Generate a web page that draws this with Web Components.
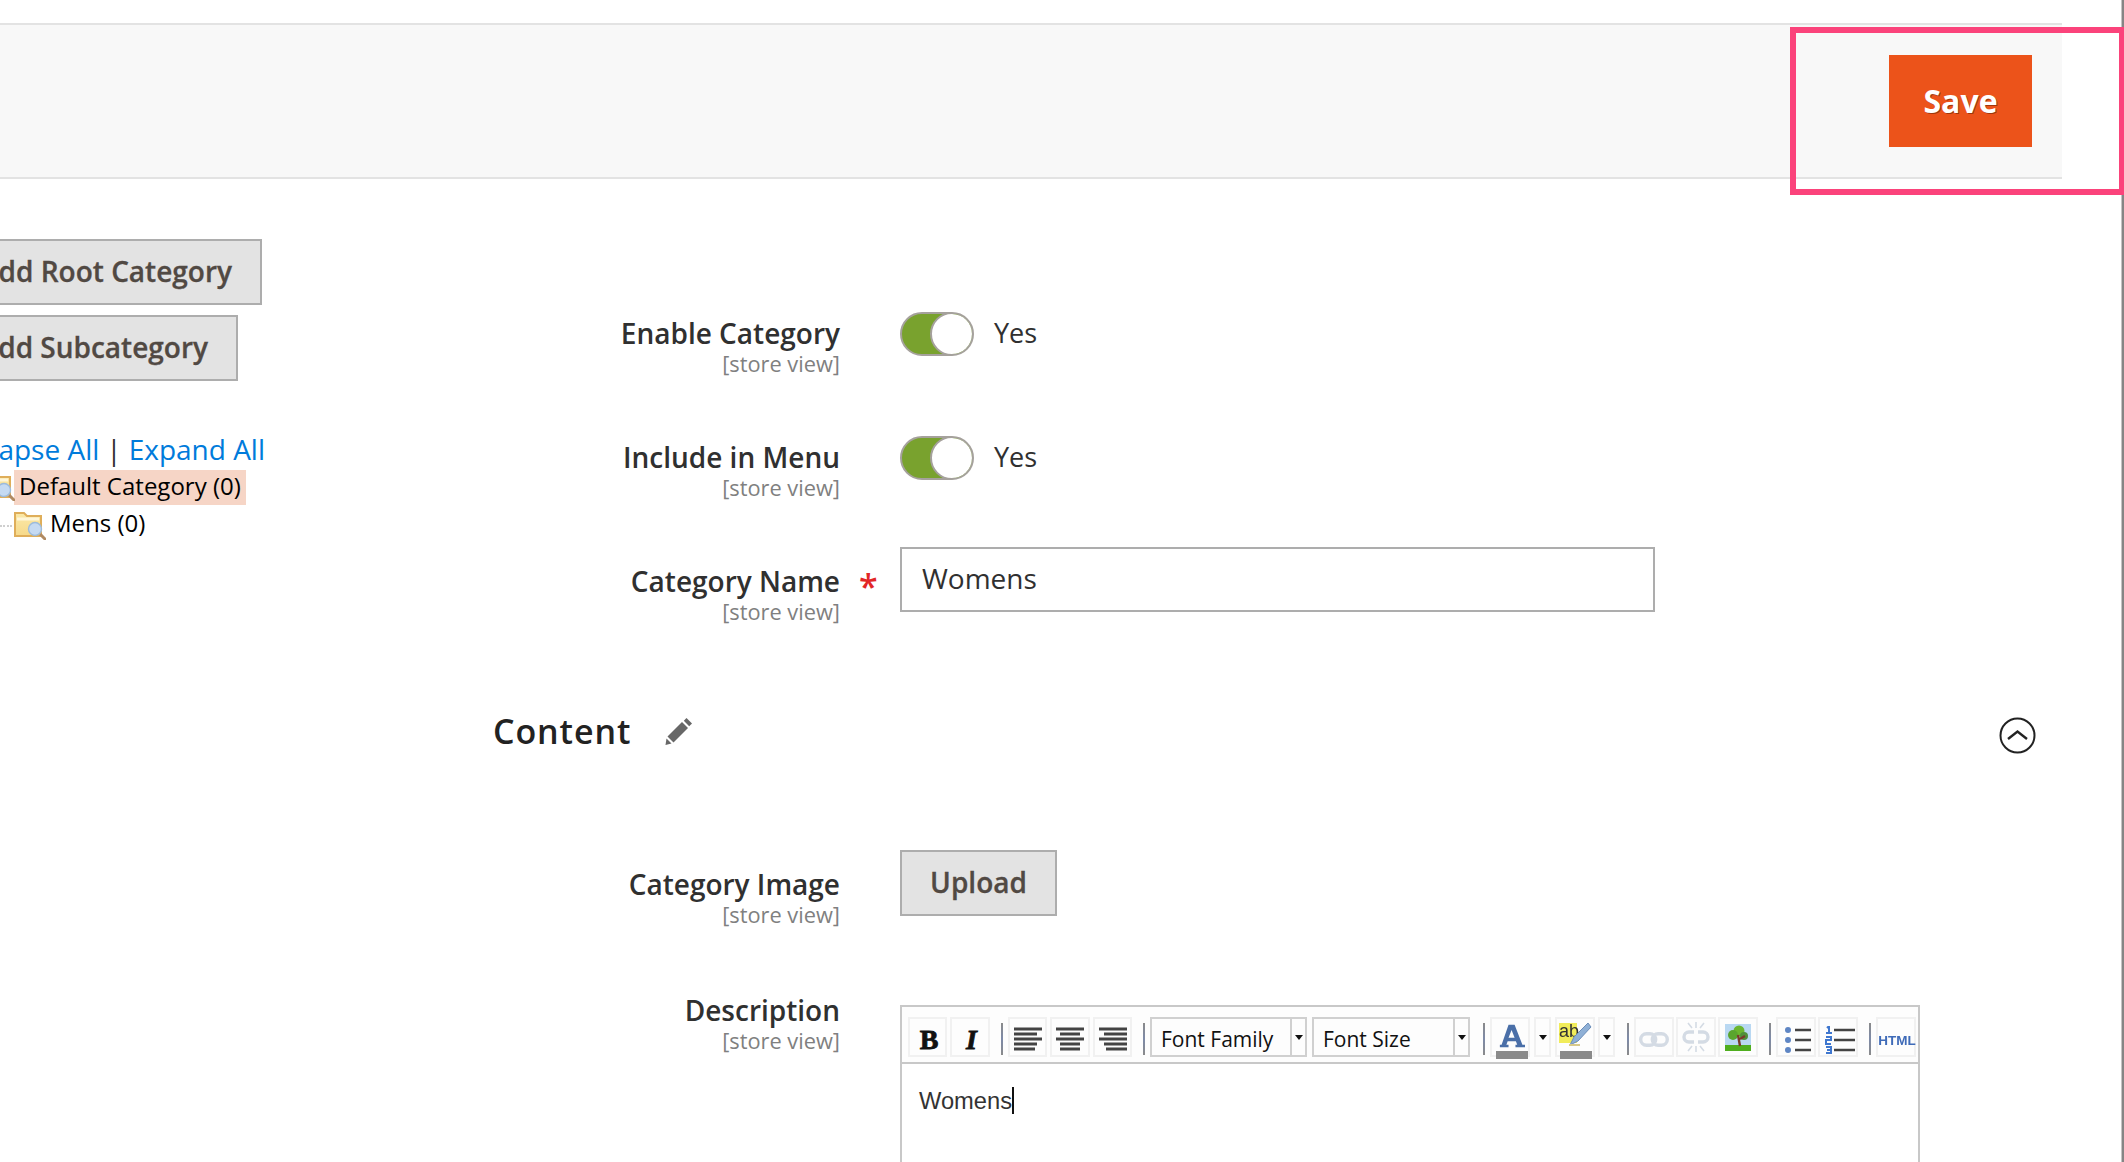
<!DOCTYPE html>
<html>
<head>
<meta charset="utf-8">
<title>Category</title>
<style>
    html, body { margin: 0; padding: 0; background: #fff; }
    body { width: 2124px; height: 1162px; overflow: hidden; font-family: "Open Sans", sans-serif; color: #303030; }
</style>
</head>
<body>
<cat-page>
    <page-actions slot="bar"></page-actions>
    <tree-panel slot="aside"></tree-panel>
    <cat-form slot="main"></cat-form>
</cat-page>

<script>
const pageTemplate = document.createElement('template');
pageTemplate.innerHTML = `
    <style>
        :host { display: block; position: relative; width: 2124px; height: 1162px; overflow: hidden; padding-top: 23px; box-sizing: border-box; }
        .body { display: flex; }
        .aside { width: 400px; flex: none; }
        .main { flex: 1; min-width: 0; }
        .edge { position: absolute; right: 0; top: 0; bottom: 0; width: 2px; background: #858585; border-left: 1px solid #c4c4c4; }
        .mark { position: absolute; left: 1790px; top: 27px; width: 334px; height: 168px; box-sizing: border-box; border: 6px solid #fb437b; border-right-width: 5px; }
    </style>
    <slot name="bar"></slot>
    <div class="body">
        <div class="aside"><slot name="aside"></slot></div>
        <div class="main"><slot name="main"></slot></div>
    </div>
    <div class="edge"></div>
    <div class="mark"></div>
`;

class CatPage extends HTMLElement
{
    constructor()
    {
        super();
        this.attachShadow({mode: 'open'}).appendChild(pageTemplate.content.cloneNode(true));
    }
}

const actionsTemplate = document.createElement('template');
actionsTemplate.innerHTML = `
    <style>
        :host { display: flex; justify-content: flex-end; align-items: center; box-sizing: border-box; width: 2062px; height: 156px; padding-right: 30px; background: #f8f8f8; border-top: 2px solid #e3e3e3; border-bottom: 2px solid #e3e3e3; }
        button { width: 143px; height: 92px; border: 0; padding: 0 0 2px; background: #ec531a; color: #fff; font: 700 32px "Open Sans", sans-serif; text-shadow: 1px 1px 0 rgba(90,30,0,.55); }
    </style>
    <button>Save</button>
`;

class PageActions extends HTMLElement
{
    constructor()
    {
        super();
        this.attachShadow({mode: 'open'}).appendChild(actionsTemplate.content.cloneNode(true));
    }
}

const folderIcon = `
    <defs><linearGradient id="fold" x1="0" y1="0" x2="0" y2="1"><stop offset="0" stop-color="#fbe9a8"/><stop offset="1" stop-color="#f6d98a"/></linearGradient></defs>
    <path d="M1 1 H10 L13 4 H27 V24 H1 Z" fill="url(#fold)" stroke="#dfae5a" stroke-width="2"/>
    <path d="M3 7 H25" stroke="#fff6d8" stroke-width="3"/>
    <path d="M26 22 L32 28" stroke="#b08a62" stroke-width="3"/>
    <circle cx="21" cy="17" r="6.5" fill="#c5daf2" stroke="#9cbbdc" stroke-width="1.4"/>
`;

const treeTemplate = document.createElement('template');
treeTemplate.innerHTML = `
    <style>
        :host { display: block; overflow: hidden; padding-top: 60px; height: 400px; }
        .btn { display: flex; align-items: center; justify-content: flex-end; box-sizing: border-box; height: 66px; border: 2px solid #adadad; border-left: 0; background: #e3e3e3; color: #514943; font-size: 28px; font-weight: 600; -webkit-text-stroke: .3px #514943; white-space: nowrap; padding: 0 28px 3px 0; }
        .root { width: 262px; }
        .sub { width: 238px; margin-top: 10px; }
        .links { margin-top: 50px; width: 265px; height: 38px; line-height: 36px; font-size: 28px; color: #303030; white-space: nowrap; display: flex; justify-content: flex-end; }
        .links a { color: #007bdb; }
        .links span { margin: 0 7px; }
        ul { list-style: none; margin: 0; padding: 0; font-size: 24px; color: #000; }
        li { display: flex; align-items: center; height: 36px; white-space: nowrap; }
        .one b { font-weight: 400; background: #f6d5c6; margin-left: 14px; padding: 0 0 0 5px; height: 35px; line-height: 32px; width: 232px; box-sizing: border-box; }
        .two { position: relative; margin-top: 1px; padding-left: 14px; }
        .two span { margin-left: 4px; margin-top: -4px; }
        svg { display: block; flex: none; margin-top: 4px; }
        .cut { position: absolute; left: -17px; top: -33px; margin: 0; }
        .dots { position: absolute; left: 0; top: 19px; width: 12px; border-top: 2px dotted #cfcfcf; }
    </style>
    <div class="btn root">dd Root Category</div>
    <div class="btn sub">dd Subcategory</div>
    <div class="links"><a>apse All</a><span>|</span><a>Expand All</a></div>
    <ul>
        <li class="one"><b>Default Category (0)</b></li>
        <li class="two">
            <svg class="cut" width="32" height="28" viewBox="0 0 32 28">${folderIcon}</svg>
            <div class="dots"></div>
            <svg width="32" height="28" viewBox="0 0 32 28">${folderIcon}</svg>
            <span>Mens (0)</span>
        </li>
    </ul>
`;

class TreePanel extends HTMLElement
{
    constructor()
    {
        super();
        this.attachShadow({mode: 'open'}).appendChild(treeTemplate.content.cloneNode(true));
    }
}

const fieldTemplate = document.createElement('template');
fieldTemplate.innerHTML = `
    <style>
        :host { display: grid; grid-template-columns: 440px 1fr; column-gap: 60px; }
        .label { text-align: right; position: relative; }
        .name { font-size: 28px; font-weight: 600; line-height: 38px; color: #303030; white-space: nowrap; }
        .scope { font-size: 21.8px; line-height: 23px; height: 24px; color: #808080; white-space: nowrap; }
        :host([required]) .name::after { content: '*'; position: absolute; left: 459px; top: 5px; color: #e22626; font-size: 34px; font-weight: 600; }
    </style>
    <div class="label">
        <div class="name"></div>
        <div class="scope">[store view]</div>
    </div>
    <div><slot></slot></div>
`;

class FormField extends HTMLElement
{
    constructor()
    {
        super();
        this.attachShadow({mode: 'open'}).appendChild(fieldTemplate.content.cloneNode(true));
        this.shadowRoot.querySelector('.name').textContent = this.getAttribute('label');
    }
}

const toggleTemplate = document.createElement('template');
toggleTemplate.innerHTML = `
    <style>
        :host { display: flex; align-items: center; gap: 20px; height: 44px; margin-top: -2px; font-size: 27px; color: #303030; }
        .track { position: relative; box-sizing: border-box; width: 74px; height: 44px; border-radius: 22px; border: 2px solid #a5a19c; background: #79a22e; overflow: hidden; }
        .track::after { content: ''; position: absolute; right: -2px; top: -2px; width: 44px; height: 44px; box-sizing: border-box; border-radius: 50%; border: 2px solid #a5a19c; background: #fff; }
        span { margin-top: -3px; }
    </style>
    <div class="track"></div>
    <span><slot></slot></span>
`;

class ToggleSwitch extends HTMLElement
{
    constructor()
    {
        super();
        this.attachShadow({mode: 'open'}).appendChild(toggleTemplate.content.cloneNode(true));
    }
}

const formTemplate = document.createElement('template');
formTemplate.innerHTML = `
    <style>
        :host { display: block; padding-top: 135px; }
        form-field { margin-bottom: 62px; }
        .input { box-sizing: border-box; width: 755px; height: 65px; margin-top: -15px; border: 2px solid #adadad; padding-left: 20px; font-size: 28px; line-height: 58px; color: #303030; }
        .head { display: flex; align-items: center; height: 60px; margin: 77px 0 0 93px; position: relative; font-size: 34px; font-weight: 600; letter-spacing: .9px; color: #222; }
        .head svg { margin: 2px 0 0 34px; }
        .head .chev { position: absolute; left: 1506px; top: 16px; margin: 0; }
        .upload { display: flex; align-items: center; justify-content: center; box-sizing: border-box; width: 157px; height: 66px; border: 2px solid #adadad; background: #e3e3e3; color: #514943; font-size: 28px; font-weight: 600; -webkit-text-stroke: .3px #514943; margin-top: -15px; padding-bottom: 3px; }
        .image { margin-top: 104px; margin-bottom: 64px; }
    </style>
    <form-field label="Enable Category"><toggle-switch>Yes</toggle-switch></form-field>
    <form-field label="Include in Menu"><toggle-switch>Yes</toggle-switch></form-field>
    <form-field label="Category Name" required style="margin-bottom:0"><div class="input">Womens</div></form-field>
    <div class="head">Content
        <svg width="29" height="28" viewBox="0 0 29 28" fill="#676767"><path d="M2.5 18.5 L8.5 24.5 L23 10 L17 4 Z"/><path d="M18.8 2.8 L24.2 8.2 L27 5.5 L21.5 0 Z"/><path d="M1.5 20.5 L6.5 25.5 L0.5 27 Z"/></svg>
        <svg class="chev" width="37" height="37" viewBox="0 0 37 37" fill="none" stroke="#222"><circle cx="18.5" cy="18.5" r="17" stroke-width="2"/><path d="M9 22 L18.5 14.5 L28 22" stroke-width="2.4"/></svg>
    </div>
    <form-field label="Category Image" class="image"><div class="upload">Upload</div></form-field>
    <form-field label="Description" style="margin-bottom:0"><wysiwyg-editor></wysiwyg-editor></form-field>
`;

class CatForm extends HTMLElement
{
    constructor()
    {
        super();
        this.attachShadow({mode: 'open'}).appendChild(formTemplate.content.cloneNode(true));
    }
}

const editorTemplate = document.createElement('template');
editorTemplate.innerHTML = `
    <style>
        :host { display: block; box-sizing: border-box; width: 1020px; height: 300px; border: 2px solid #c8c8c8; margin: 14px 0 0 0; }
        .bar { display: flex; align-items: center; box-sizing: border-box; height: 57px; padding: 5px 0 0 6px; border-bottom: 2px solid #c8c8c8; background: #fdfdfd; }
        .b { box-sizing: border-box; flex: none; width: 39px; height: 40px; border: 2px solid #f1f1f1; display: flex; align-items: center; justify-content: center; position: relative; }
        .w { width: 40px; }
        .drop { box-sizing: border-box; flex: none; width: 17px; height: 40px; border: 2px solid #f1f1f1; display: flex; align-items: center; justify-content: center; }
        .sep { flex: none; width: 2px; height: 32px; margin-top: 3px; background: linear-gradient(#8a8a8a, #7d8aa8, #8a8a8a); }
        .sel { flex: none; box-sizing: border-box; height: 40px; border: 2px solid #d0d0d0; display: flex; font: 21px "Open Sans", sans-serif; color: #111; }
        .sel span { display: block; flex: 1; padding-left: 9px; line-height: 41px; white-space: nowrap; }
        .sel i { flex: none; width: 13px; border-left: 2px solid #d0d0d0; display: flex; align-items: center; justify-content: center; }
        .tri { width: 0; height: 0; border: 4.5px solid transparent; border-top: 5px solid #111; border-bottom: 0; }
        .bold { font: 700 28px "Liberation Serif", serif; -webkit-text-stroke: .8px #111; color: #111; margin: 5px 0 0 3px; }
        .ital { font: italic 700 28px "Liberation Serif", serif; -webkit-text-stroke: .8px #111; color: #111; margin: 5px 0 0 3px; }
        .swatch { position: absolute; left: 4px; width: 32px; bottom: -4px; height: 8px; background: #8a8a8a; }
        .html { font: 700 13.5px "Liberation Sans", sans-serif; color: #3f6bb8; white-space: nowrap; margin: 6px 0 0 2px; filter: blur(.3px); }
        .content { padding: 17px 17px; font: 23.7px/40px "Liberation Sans", Arial, sans-serif; color: #333; }
        .caret { display: inline-block; width: 2px; height: 27px; background: #111; vertical-align: -5px; }
        svg { display: block; flex: none; }
        .soft { filter: blur(.5px); }
        .al { margin-top: 5px; }
        .ls { margin-top: 6px; }
    </style>
    <div class="bar">
        <div class="b"><span class="bold">B</span></div>
        <div class="b w" style="margin-left:3px"><span class="ital">I</span></div>
        <div class="sep" style="margin-left:11px"></div>
        <div class="b" style="margin-left:5px"><svg class="al" width="28" height="25" stroke="#444" stroke-width="3.2"><path d="M0 2H28M0 7H23M0 12H28M0 17H23M0 22H21"/></svg></div>
        <div class="b w" style="margin-left:3px"><svg class="al" width="28" height="25" stroke="#444" stroke-width="3.2"><path d="M0 2H28M4 7H24M0 12H28M4 17H24M4 22H24"/></svg></div>
        <div class="b" style="margin-left:3px"><svg class="al" width="28" height="25" stroke="#444" stroke-width="3.2"><path d="M0 2H28M5 7H28M0 12H28M5 17H28M7 22H28"/></svg></div>
        <div class="sep" style="margin-left:11px"></div>
        <div class="sel" style="width:157px;margin-left:5px"><span>Font Family</span><i><b class="tri"></b></i></div>
        <div class="sel" style="width:158px;margin-left:5px"><span>Font Size</span><i><b class="tri"></b></i></div>
        <div class="sep" style="margin-left:13px"></div>
        <div class="b w" style="margin-left:5px">
            <svg class="soft" style="margin:-3px 0 0 4px" width="26" height="26" viewBox="0 0 30 28"><path d="M11 1 H18 L27 24 H30 V27 H19 V24 H21 L19.5 20 H10 L8.5 24 H11 V27 H1 V24 H3 Z M11 16 H18 L14.5 7 Z" fill="#4a6fa8" fill-rule="evenodd"/></svg>
            <div class="swatch"></div>
        </div>
        <div class="drop" style="margin-left:4px"><b class="tri"></b></div>
        <div class="b w" style="margin-left:4px">
            <svg class="soft" style="margin-top:-7px" width="34" height="24" viewBox="0 0 34 24"><rect x="1" y="1" width="18" height="20" fill="#f1ec5a"/><text x="1" y="15" font-family="Liberation Sans" font-size="18" fill="#333">ab</text><path d="M33 5 L30 1 L16 15 L12 23 L20 19 Z" fill="#8fb0d6" stroke="#6b8db8"/><path d="M11 23 H22" stroke="#d8c98a" stroke-width="2"/></svg>
            <div class="swatch" style="left:3px"></div>
        </div>
        <div class="drop" style="margin-left:3px"><b class="tri"></b></div>
        <div class="sep" style="margin-left:12px"></div>
        <div class="b w" style="margin-left:5px">
            <svg class="soft" style="margin-top:4px" width="30" height="15" viewBox="0 0 30 15" fill="none" stroke="#d4dbe4" stroke-width="3.4"><rect x="1.7" y="1.7" width="15" height="11.6" rx="5.8"/><rect x="13.3" y="1.7" width="15" height="11.6" rx="5.8"/></svg>
        </div>
        <div class="b w" style="margin-left:2px">
            <svg class="soft" width="30" height="32" viewBox="0 0 30 32" fill="none" stroke="#d4dbe4" stroke-width="3.4"><path d="M13 11 H8 A5 5 0 0 0 8 21 H13M17 11 H22 A5 5 0 0 1 22 21 H17"/><path stroke-width="1.6" d="M15 1V7M7 2L11 7M23 2L19 7M15 25V31M7 30L11 25M23 30L19 25"/></svg>
        </div>
        <div class="b w" style="margin-left:2px">
            <svg class="soft" width="26" height="27" viewBox="0 0 26 27"><rect x="0" y="0" width="26" height="24" fill="#b9d8f2"/><rect x="0" y="21" width="26" height="6" fill="#4fae1f"/><circle cx="14" cy="7" r="5.5" fill="#6bb62f"/><circle cx="8" cy="11" r="5" fill="#5aa52e"/><circle cx="19" cy="12" r="4" fill="#4f8f3a"/><path d="M13 11 L15 22 M15 15 L20 12" stroke="#7a3a2a" stroke-width="2.4" fill="none"/></svg>
        </div>
        <div class="sep" style="margin-left:11px"></div>
        <div class="b w" style="margin-left:5px">
            <svg class="ls soft" width="30" height="28" viewBox="0 0 30 28"><g fill="#5f86c4"><circle cx="7" cy="4" r="3"/><circle cx="7" cy="14" r="3"/><circle cx="7" cy="24" r="3"/></g><path d="M14 4H30M14 14H30M14 24H30" stroke="#444" stroke-width="2.4"/></svg>
        </div>
        <div class="b w" style="margin-left:2px">
            <svg class="ls soft" width="34" height="28" viewBox="0 0 34 28"><g stroke="#3f77cf" stroke-width="2" fill="none"><path d="M6 2 L8 0 V7M5 7H11"/><path d="M5 11 H10 V14 H5 V18 H10"/><path d="M5 21 H10 V24 H6M10 24 V27 H5"/></g><path d="M13 4H34M13 14H34M13 24H34" stroke="#444" stroke-width="2.4"/></svg>
        </div>
        <div class="sep" style="margin-left:11px"></div>
        <div class="b w" style="margin-left:5px"><span class="html">HTML</span></div>
    </div>
    <div class="content">Womens<span class="caret"></span></div>
`;

class WysiwygEditor extends HTMLElement
{
    constructor()
    {
        super();
        this.attachShadow({mode: 'open'}).appendChild(editorTemplate.content.cloneNode(true));
    }
}

customElements.define('cat-page', CatPage);
customElements.define('page-actions', PageActions);
customElements.define('tree-panel', TreePanel);
customElements.define('form-field', FormField);
customElements.define('toggle-switch', ToggleSwitch);
customElements.define('cat-form', CatForm);
customElements.define('wysiwyg-editor', WysiwygEditor);
</script>
</body>
</html>
